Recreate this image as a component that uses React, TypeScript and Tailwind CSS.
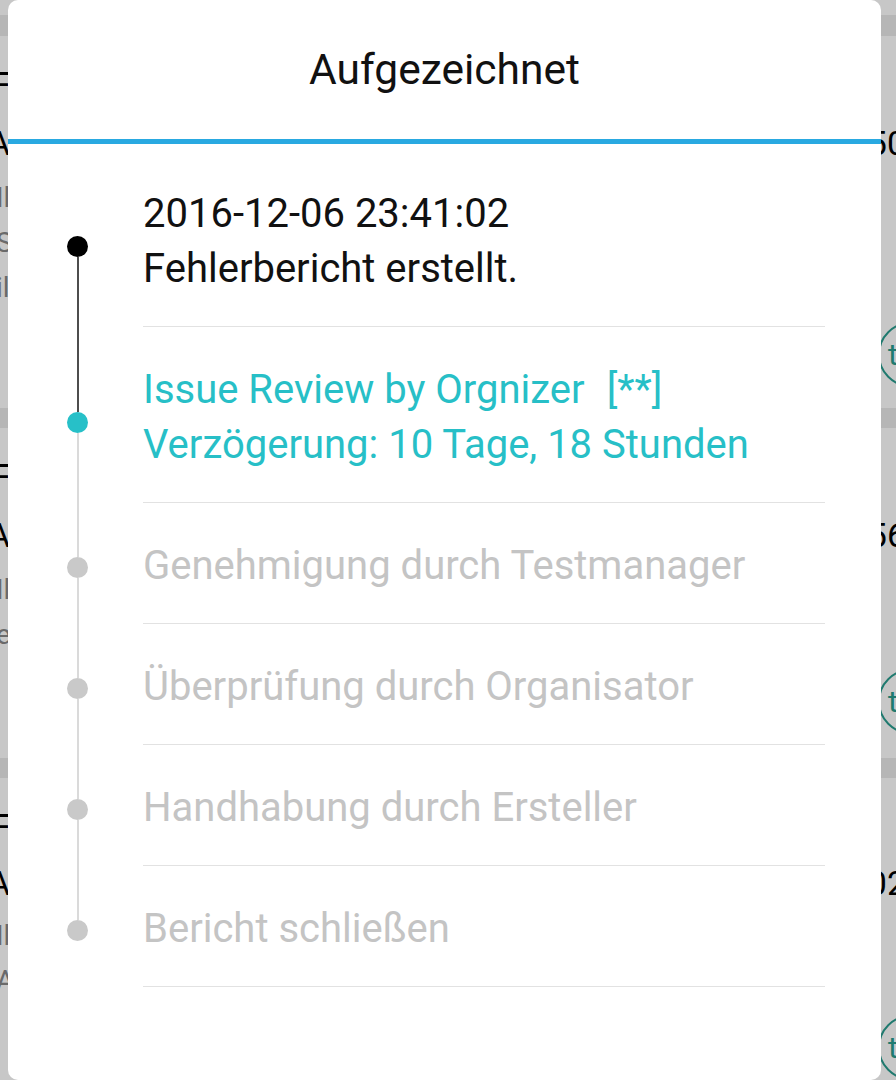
import React from "react";

type StepState = "done" | "current" | "todo";

interface stepProps {
  lines: React.ReactNode[];
  state: StepState;
  top: "none" | "dark" | "light";
  bottom: "none" | "dark" | "light";
}

const steps: stepProps[] = [
  { lines: ["2016-12-06 23:41:02", "Fehlerbericht erstellt."], state: "done", top: "none", bottom: "dark" },
  {
    lines: [
      <>
        Issue Review by Orgnizer<span className="ml-[22px]">[**]</span>
      </>,
      "Verzögerung: 10 Tage, 18 Stunden",
    ],
    state: "current",
    top: "dark",
    bottom: "light",
  },
  { lines: ["Genehmigung durch Testmanager"], state: "todo", top: "light", bottom: "light" },
  { lines: ["Überprüfung durch Organisator"], state: "todo", top: "light", bottom: "light" },
  { lines: ["Handhabung durch Ersteller"], state: "todo", top: "light", bottom: "light" },
  { lines: ["Bericht schließen"], state: "todo", top: "light", bottom: "none" },
];

const segColor = {
  none: "bg-transparent",
  dark: "bg-[#4d4d4d]",
  light: "bg-[#dadada]",
};

const dotColor = {
  done: "bg-black",
  current: "bg-[#27c0c8]",
  todo: "bg-[#c9c9c9]",
};

const textColor = {
  done: "text-[#111111]",
  current: "text-[#27bfc7]",
  todo: "text-[#c4c4c4]",
};

// only the edges of this list peek out from behind the dialog
const BgCard = ({ value, notes, height }: { value: string; notes: string[]; height: string }) => (
  <div className={`bg-white flex flex-col overflow-hidden ${height}`}>
    <div className="mt-[25px] h-[50px] leading-[50px] text-[36px] text-black ml-[-9px] whitespace-nowrap">Fo</div>
    <div className="h-[64px] flex items-center justify-between text-[34px] text-black whitespace-nowrap">
      <span className="ml-[-12px]">Al</span>
      <span className="mr-[-10px]">{value}</span>
    </div>
    {notes.map((note, i) => (
      <div key={i} className="h-[45px] leading-[45px] text-[28px] text-[#888888] ml-[-4px] whitespace-nowrap">
        {note}
      </div>
    ))}
    <div className="mt-[12px] flex justify-end">
      <div className="mr-[-72px] h-[65px] w-[90px] rounded-full border-2 border-[#2a9d8f] text-[#2a9d8f] pl-[8px] flex items-center text-[30px]">
        t
      </div>
    </div>
  </div>
);

const App = () => {
  return (
    <div className="relative h-[1080px] overflow-hidden bg-white font-['Roboto',sans-serif]">
      <div className="flex flex-col">
        <div className="h-[15px] bg-white"></div>
        <div className="h-[21px] bg-[#e9e9e9]"></div>
        <BgCard value="50" notes={["Il", "Si", "il"]} height="h-[372px]" />
        <div className="h-[20px] bg-[#e9e9e9]"></div>
        <BgCard value="56" notes={["Il", "el"]} height="h-[330px]" />
        <div className="h-[20px] bg-[#e9e9e9]"></div>
        <BgCard value="02" notes={["Il", "Al"]} height="h-[302px]" />
      </div>

      <div className="fixed inset-0 bg-black/[0.22]"></div>

      <div className="fixed top-0 left-[8px] w-[873px] h-[1080px] rounded-[10px] bg-white flex flex-col">
        <div className="h-[139px] flex items-center justify-center text-[42.5px] text-[#111111]">Aufgezeichnet</div>
        <div className="h-[5px] bg-[#29a9e1]"></div>

        <div className="pt-[7px] flex flex-col">
          {steps.map((step, index) => (
            <div className="flex" key={index}>
              <div className="w-[135px] shrink-0 pl-[59px]">
                <div className="w-[21px] h-full flex flex-col items-center">
                  <div className={`w-[2px] grow basis-0 ${segColor[step.top]}`}></div>
                  <div
                    className={`w-[2px] ${step.lines.length > 1 ? "h-[14px]" : "h-[8px]"} ${segColor[step.top]}`}
                  ></div>
                  <div className={`w-[21px] h-[21px] rounded-full shrink-0 ${dotColor[step.state]}`}></div>
                  <div className={`w-[2px] grow basis-0 ${segColor[step.bottom]}`}></div>
                </div>
              </div>
              <div
                className={`flex-1 mr-[56px] border-b border-[#e2e2e2] pt-[35px] pb-[30px] text-[40px] leading-[55px] whitespace-nowrap ${textColor[step.state]}`}
              >
                {step.lines.map((line, i) => (
                  <div key={i}>{line}</div>
                ))}
              </div>
            </div>
          ))}
        </div>
      </div>
    </div>
  );
};

export default App;
